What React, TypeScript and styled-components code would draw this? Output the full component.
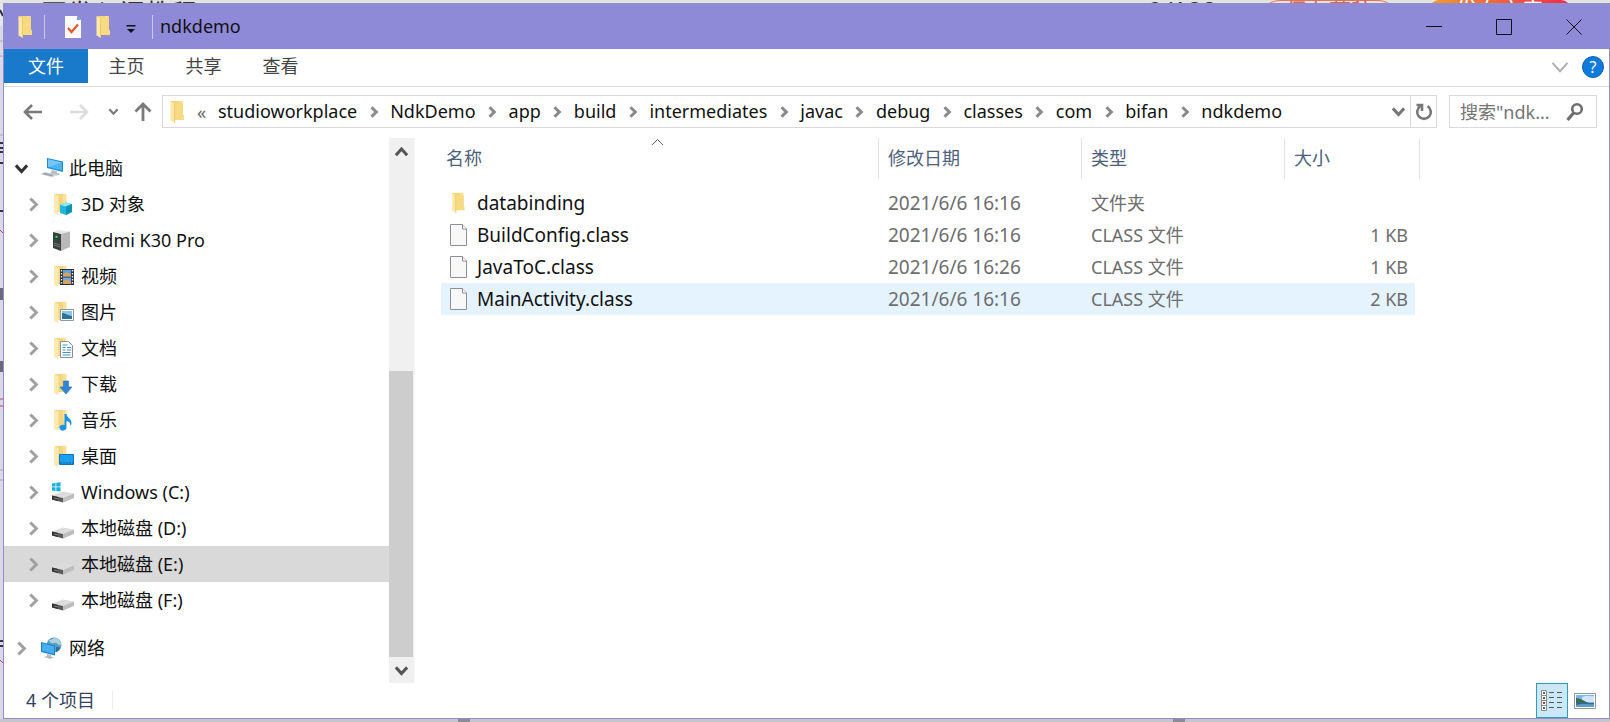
import React, { useState } from 'react';
import styled, { createGlobalStyle, css } from 'styled-components';

const Global = createGlobalStyle`
  * { box-sizing: border-box; }
  body { margin: 0; font: 18px/24px "Noto Sans", "Noto Sans CJK SC", sans-serif; color: #111; }
  button, input { font: inherit; color: inherit; }
  button { border: 0; padding: 0; background: none; }
  svg { display: block; flex: none; }
`;

/* ---------- desktop behind the window ---------- */

const Desktop = styled.div`
  position: relative;
  display: flex;
  min-height: 100vh;
  padding: 3px 0 3px 3px;
  background: #dad8e6;
`;

const BackPage = styled.div`
  position: absolute;
  inset: 0;
  overflow: hidden;
`;

const BackHeader = styled.div`
  position: absolute;
  inset: 0 0 auto;
  height: 4px;
  padding: 0 39px 0 41px;
  overflow: hidden;
  display: flex;
  align-items: flex-start;
  background: #e3e3e1;
  font-size: 26px;
  line-height: 26px;
  color: #333;
`;

const BackTitle = styled.span`
  flex: 1;
`;

const BackButton = styled.span<{ $solid?: boolean }>`
  width: 142px;
  height: 44px;
  margin-left: 29px;
  border: 1px solid #e8715a;
  border-radius: 22px;
  text-align: center;
  font-size: 22px;
  line-height: 18px;
  color: #d9644c;
  ${p => p.$solid && css`
    border: 0;
    border-radius: 10px;
    background: linear-gradient(90deg, #f59a2c, #ee2a4a);
    color: #fff;
  `}
`;

const BackCounter = styled.span`
  margin-right: 12px;
  line-height: 20px;
`;

const BackFooter = styled.div`
  position: absolute;
  inset: auto 0 0;
  height: 3px;
  display: flex;
  justify-content: space-between;
  padding: 0 425px 0 458px;
  background: #c6c5cc;
`;

const BackGrip = styled.i`
  width: 12px;
  height: 3px;
  background: #8d8b96;
`;

/* ---------- window frame ---------- */

const Window = styled.main`
  position: relative;
  flex: 1;
  min-width: 0;
  display: flex;
  flex-direction: column;
  border: 1px solid #918dc6;
  background: #fff;
`;

const TitleBar = styled.header`
  display: flex;
  align-items: center;
  height: 45px;
  padding-left: 13px;
  background: #8f8ad7;
`;

const TitleRule = styled.i`
  width: 1px;
  height: 24px;
  background: #c9c6ee;
`;

const QuickTools = styled.div`
  display: flex;
  align-items: center;
  padding: 0 8px 0 13px;
`;

const QuickButton = styled.button<{ $slim?: boolean }>`
  display: grid;
  place-items: center;
  width: ${p => (p.$slim ? 26 : 30)}px;
  height: 30px;
`;

const AppIcon = styled.span`
  margin-right: 11px;
`;

const Title = styled.h1`
  flex: 1;
  margin: 0 0 0 7px;
  padding-bottom: 2px;
  font-size: 18px;
  font-weight: 400;
`;

const WindowButton = styled.button`
  display: grid;
  place-items: center;
  width: 70px;
  height: 45px;
`;

/* ---------- ribbon ---------- */

const Ribbon = styled.div`
  display: flex;
  align-items: flex-start;
  height: 38px;
  padding-right: 5px;
  border-bottom: 1px solid #d9dadb;
`;

const Tab = styled.button<{ $primary?: boolean }>`
  width: ${p => (p.$primary ? 84 : 77)}px;
  height: 34px;
  color: ${p => (p.$primary ? '#fff' : '#444')};
  background: ${p => (p.$primary ? '#1979ca' : 'none')};
`;

const RibbonEnd = styled.div`
  display: flex;
  align-items: center;
  gap: 12px;
  height: 36px;
  margin-left: auto;
`;

const HelpButton = styled.button`
  width: 22px;
  height: 22px;
  border-radius: 50%;
  border: 1px solid #0a62b4;
  background: #0f7bdc;
  color: #fff;
  font-size: 16px;
  line-height: 20px;
`;

/* ---------- navigation row ---------- */

const NavRow = styled.div`
  display: flex;
  align-items: center;
  height: 51px;
  padding: 0 12px 2px 6px;
`;

const NavButton = styled.button<{ $w: number }>`
  display: grid;
  place-items: center;
  width: ${p => p.$w}px;
  height: 32px;
`;

const AddressBar = styled.div`
  flex: 1;
  min-width: 0;
  display: flex;
  align-items: center;
  height: 33px;
  padding-left: 6px;
  border: 1px solid #d9d9d9;
`;

const Crumbs = styled.nav`
  flex: 1;
  min-width: 0;
  display: flex;
  align-items: center;
  overflow: hidden;
`;

const Overflow = styled.button`
  width: 33px;
  height: 28px;
  color: #666;
`;

const Crumb = styled.a`
  padding-bottom: 2px;
  color: #111;
  text-decoration: none;
`;

const CrumbGap = styled.span`
  display: grid;
  place-items: center;
  width: 33px;
`;

const RefreshButton = styled.button`
  display: grid;
  place-items: center;
  width: 26px;
  height: 31px;
  border-left: 1px solid #d9d9d9;
`;

const SearchBox = styled.label`
  display: flex;
  align-items: center;
  width: 148px;
  height: 33px;
  margin-left: 12px;
  padding: 0 12px 0 10px;
  border: 1px solid #d9d9d9;
`;

const SearchInput = styled.input`
  flex: 1;
  min-width: 0;
  padding: 0;
  border: 0;
  outline: 0;
  background: none;
  &::placeholder { color: #757575; opacity: 1; }
`;

/* ---------- folder tree ---------- */

const Body = styled.div`
  flex: 1;
  display: flex;
  min-height: 0;
`;

const Sidebar = styled.aside`
  display: flex;
  width: 411px;
  border-right: 1px solid #f6f6f6;
`;

const Tree = styled.ul`
  flex: 1;
  margin: 0;
  padding: 12px 0 0;
  list-style: none;
`;

const TreeRow = styled.li<{ $child?: boolean; $selected?: boolean; $apart?: boolean }>`
  display: flex;
  align-items: center;
  height: 36px;
  margin-top: ${p => (p.$apart ? 12 : 0)}px;
  padding-left: ${p => (p.$child ? 17 : 5)}px;
  background: ${p => (p.$selected ? '#d9d9d9' : 'none')};
`;

const Expander = styled.button`
  display: grid;
  place-items: center;
  width: 24px;
  height: 24px;
  margin-right: 7px;
`;

const TreeLink = styled.a`
  display: flex;
  align-items: center;
  gap: 5px;
  color: #111;
  text-decoration: none;
`;

const Scrollbar = styled.div`
  display: flex;
  flex-direction: column;
  width: 25px;
  background: #f0f0f0;
`;

const ScrollButton = styled.button`
  display: grid;
  place-items: center;
  height: 26px;
`;

const Track = styled.div`
  flex: 1;
  display: flex;
  align-items: flex-end;
`;

const Thumb = styled.div`
  width: 24px;
  height: 58%;
  background: #cdcdcd;
`;

/* ---------- file list ---------- */

const Files = styled.section`
  flex: 1;
  min-width: 0;
  padding-left: 26px;
`;

const Table = styled.table`
  table-layout: fixed;
  width: 979px;
  border-collapse: separate;
  border-spacing: 0;
`;

const Col = styled.col<{ $w: number }>`
  width: ${p => p.$w}px;
`;

const Th = styled.th`
  position: relative;
  height: 49px;
  padding: 0 0 8px;
  text-align: left;
  font-weight: 400;
  color: #4c607a;
`;

const ThLabel = styled.div<{ $first?: boolean }>`
  height: 41px;
  padding-left: ${p => (p.$first ? 5 : 9)}px;
  line-height: 41px;
  border-right: 1px solid #e3e3e3;
`;

const SortMark = styled.span`
  position: absolute;
  top: 0;
  left: 50%;
  margin-left: -9px;
`;

const Td = styled.td<{ $size?: boolean }>`
  height: 32px;
  padding: 0 0 0 9px;
  color: #6d6d6d;
  white-space: nowrap;
  ${p => p.$size && css`
    padding-right: 7px;
    border-right: 5px solid transparent;
    background-clip: padding-box;
    text-align: right;
  `}
`;

const Tr = styled.tr<{ $hot?: boolean }>`
  ${p => p.$hot && css`
    ${Td} { background-color: #e5f3ff; }
  `}
`;

const FileLink = styled.a`
  display: flex;
  align-items: center;
  gap: 9px;
  font-size: 19px;
  color: #111;
  text-decoration: none;
`;

const Stamp = styled.time`
  font-size: 19px;
`;

/* ---------- status bar ---------- */

const StatusBar = styled.footer`
  display: flex;
  align-items: center;
  height: 35px;
  padding: 0 7px 0 22px;
  color: #33415c;
`;

const Count = styled.span`
  margin-bottom: 2px;
  padding-right: 17px;
  border-right: 1px solid #eee;
  line-height: 20px;
`;

const Views = styled.div`
  display: flex;
  margin-left: auto;
`;

const ViewButton = styled.button<{ $on?: boolean }>`
  display: grid;
  place-items: center;
  width: ${p => (p.$on ? 32 : 34)}px;
  height: 35px;
  ${p => p.$on && css`
    border: 1px solid #2f9cc4;
    background: #cce8f6;
  `}
`;

/* ---------- drawings ---------- */

const FolderShape = () => (
  <>
    <path d="M2 1h7l5 3v15H4z" fill="#f0cb62" />
    <path d="M4 1h9.500v18H4z" fill="#f5d57a" />
    <path d="M10 1h3.500v14H10z" fill="#f9df8f" />
    <path d="M1.500 1L6 3.500V23L1.500 20.500z" fill="#fde9a6" />
    <path d="M6 3.500L13.500 2v12l1.500 1.500V20L6 20z" fill="#f8da82" />
    <path d="M6 3.500V23l-1-.5V3z" fill="#eec968" />
  </>
);

const Folder = () => (
  <svg width="16" height="24" viewBox="0 0 16 24"><FolderShape /></svg>
);

const FolderWith = ({ children }: { children: React.ReactNode }) => (
  <svg width="24" height="24" viewBox="0 0 24 24">
    <path d="M2 2h8l4 1v17H3z" fill="#f3d583" />
    <path d="M2 2l4.500 2v19L2 21z" fill="#fdeab0" />
    <path d="M11 2h3.500v10H11z" fill="#f9e19a" />
    {children}
  </svg>
);

const Chevron = ({ dir, size = 12, w = 3, color = '#8a8a8a' }:
  { dir: 'up' | 'down' | 'right'; size?: number; w?: number; color?: string }) => {
  const d = { up: 'M1.500 9L6 4l4.500 5', down: 'M1.500 3.500L6 8.500l4.500-5', right: 'M3.500 1.200L8.300 6 3.500 10.800' }[dir];
  return (
    <svg width={size} height={size} viewBox="0 0 12 12" fill="none" stroke={color} strokeWidth={(w * 12) / size}>
      <path d={d} />
    </svg>
  );
};

const Page = () => (
  <svg width="18" height="24" viewBox="0 0 18 24">
    <path d="M.5 1.500h12l4 4.500v16.500H.5z" fill="#f8f8f8" stroke="#8b8f94" />
    <path d="M12.500 1.500V6h4" fill="#fff" stroke="#8b8f94" />
  </svg>
);

const Drive = ({ windows }: { windows?: boolean }) => (
  <svg width="24" height="24" viewBox="0 0 24 24">
    <path d="M0 15.500l11-4 11 2L11 18z" fill="#dcdcdc" />
    <path d="M0 15.500l11 2.500v4.500L0 19.500z" fill="#5a5a5a" />
    <path d="M0 15.500l6 1.400V21l-6-1.500z" fill="#333" />
    <path d="M11 18l11-4.500V18l-11 4.500z" fill="#bdbdbd" />
    <path d="M2 17.400l4 1v1.200l-4-1z" fill="#888" />
    {windows && (
      <path d="M0 3.500l3.500-.5v3.500H0zM4.300 2.800l4.200-.6v4.300H4.300zM0 7.300h3.500v3.600L0 10.400zM4.300 7.300h4.200v4.300l-4.200-.6z" fill="#12b0dc" />
    )}
  </svg>
);

const Computer = () => (
  <svg width="24" height="24" viewBox="0 0 24 24">
    <path d="M7 2l16 3.500V16L7 12z" fill="#2287d0" />
    <path d="M8 3.300l14 3.100v8.200L8 11z" fill="#4fb4f5" />
    <path d="M8 3.300l14 3.100-14 4.600z" fill="#74c8fa" />
    <path d="M12 14l5 1.300v1.700l4 1-4 1.500-7-2z" fill="#b9bfc6" />
    <path d="M0 18l5-2 12 3-5 2.500z" fill="#d3d8dd" />
    <path d="M2 18l3-1.200 9 2.300-2.500 1.200z" fill="#9aa3ab" />
  </svg>
);

const Phone = () => (
  <svg width="24" height="24" viewBox="0 0 24 24">
    <path d="M1 4l5-2 12 1.500-7 2.500z" fill="#e6e6e6" />
    <path d="M1 4l8 2v17l-8-3z" fill="#3b3f3d" />
    <path d="M9 6l9-2.500V19l-9 4z" fill="#b9b9b9" />
    <path d="M2.500 6.500l4 1v4l-4-1z" fill="#174d2b" />
    <path d="M3.500 7.800h2v2h-2z" fill="#48e07c" />
    <path d="M2 15l6 2M2 17l6 2" stroke="#777" fill="none" />
  </svg>
);

const Network = () => (
  <svg width="24" height="24" viewBox="0 0 24 24">
    <circle cx="14" cy="9" r="7.500" fill="#5b9fbe" />
    <path d="M9 4c3 0 4-2 7-2 3 1 5 4 5 7-3 1-4-3-7-2s-4-1-5-3z" fill="#a8d3e0" />
    <path d="M16 11c2 0 4 0 4 1-1 2-2 3-4 4z" fill="#2d6f92" />
    <path d="M1 6l14 3.500v10L1 16z" fill="#1b7fcb" />
    <path d="M2 7.300l12 3v7.800L2 15z" fill="#45aef5" />
    <path d="M7 18l4 1v1.500l3 1-4 1.500-6-2 3-1z" fill="#b6bdc4" />
  </svg>
);

const Landscape = () => (
  <svg width="22" height="16" viewBox="0 0 22 16">
    <path d="M.5 .5h21v15H.5z" fill="#fff" stroke="#8f979e" />
    <path d="M2 2h18v6H2z" fill="#79b4f0" />
    <path d="M8 4c4-2 8 0 12-1v6H8z" fill="#cfe5fa" />
    <path d="M2 5c4 0 8 3 13 5H2z" fill="#3c6b4c" />
    <path d="M2 9.500h18V14H2z" fill="#2c6c9c" />
    <path d="M2 12c6-2 12 0 18-1v3H2z" fill="#5d9fc4" />
  </svg>
);

const icons: Record<string, React.ReactNode> = {
  pc: <Computer />,
  phone: <Phone />,
  net: <Network />,
  drive: <Drive />,
  windows: <Drive windows />,
  cube: (
    <FolderWith>
      <path d="M8 13l6-2.500L20 12v8l-6 3-6-2z" fill="#22b8d6" />
      <path d="M8 13l6-2.500L20 12l-6 2.500z" fill="#8fe9f5" />
      <path d="M14 14.500L20 12v8l-6 3z" fill="#0d93b5" />
    </FolderWith>
  ),
  video: (
    <FolderWith>
      <path d="M8 5h14v16H8z" fill="#2b2f3a" />
      <path d="M11 6h8v6.500h-8z" fill="#5aa0e6" />
      <path d="M11 13.500h8V20h-8z" fill="#6aa7e8" />
      <path d="M11 10l4-2 4 3v1.500h-8zM11 17l4-1.500 4 2.500v2h-8z" fill="#d9a35c" />
      <path d="M9.500 6v15M20.500 6v15" stroke="#eee" strokeWidth="1.400" strokeDasharray="1.500 1.500" />
    </FolderWith>
  ),
  picture: (
    <FolderWith>
      <path d="M8.500 9.500h13v11h-13z" fill="#fff" stroke="#8f979e" />
      <path d="M10 11h10v4H10z" fill="#8cc3f3" />
      <path d="M10 13c3 0 5 2 9 3h-9z" fill="#3c7a5c" />
      <path d="M10 15.500h10V19H10z" fill="#2a73a8" />
    </FolderWith>
  ),
  doc: (
    <FolderWith>
      <path d="M8.500 5.500h8l4 4v12h-12z" fill="#fff" stroke="#8b8f94" />
      <path d="M10.500 9h5M10.500 11.500h3M15 11.500h4M10.500 14h3M15 14h4M10.500 16.500h8M10.500 19h8" stroke="#3d8fc9" fill="none" />
    </FolderWith>
  ),
  down: (
    <FolderWith>
      <path d="M11.500 9h5v6h3.500l-6 7-6-7h3.500z" fill="#2f86d6" stroke="#1f6bb5" strokeWidth=".6" />
    </FolderWith>
  ),
  music: (
    <FolderWith>
      <path d="M12.500 6h2c.5 4 5 4.500 5 9 0 1.500-.5 2.500-1 3 0-3-1.500-4.500-4-5v6.500a3.600 3 0 1 1-2-2.500z" fill="#1c94ea" />
    </FolderWith>
  ),
  desktop: (
    <FolderWith>
      <path d="M7.500 10.500h14v10h-14z" fill="#1a9ff1" stroke="#1672b4" />
      <path d="M8 19h13" stroke="#0f5f9c" strokeDasharray="2 1" />
    </FolderWith>
  ),
};

/* ---------- data ---------- */

const crumbs = ['studioworkplace', 'NdkDemo', 'app', 'build', 'intermediates', 'javac', 'debug', 'classes', 'com', 'bifan', 'ndkdemo'];

const tree = [
  { name: '此电脑', icon: 'pc', root: true, open: true },
  { name: '3D 对象', icon: 'cube' },
  { name: 'Redmi K30 Pro', icon: 'phone' },
  { name: '视频', icon: 'video' },
  { name: '图片', icon: 'picture' },
  { name: '文档', icon: 'doc' },
  { name: '下载', icon: 'down' },
  { name: '音乐', icon: 'music' },
  { name: '桌面', icon: 'desktop' },
  { name: 'Windows (C:)', icon: 'windows' },
  { name: '本地磁盘 (D:)', icon: 'drive' },
  { name: '本地磁盘 (E:)', icon: 'drive', selected: true },
  { name: '本地磁盘 (F:)', icon: 'drive' },
  { name: '网络', icon: 'net', root: true, apart: true },
];

const files = [
  { name: 'databinding', date: '2021/6/6 16:16', type: '文件夹', size: '', folder: true },
  { name: 'BuildConfig.class', date: '2021/6/6 16:16', type: 'CLASS 文件', size: '1 KB' },
  { name: 'JavaToC.class', date: '2021/6/6 16:26', type: 'CLASS 文件', size: '1 KB' },
  { name: 'MainActivity.class', date: '2021/6/6 16:16', type: 'CLASS 文件', size: '2 KB', hot: true },
];

export default function App() {
  const [query, setQuery] = useState('');
  return (
    <Desktop>
      <Global />
      <BackPage aria-hidden="true">
        <svg width="4" height="722" viewBox="0 0 4 722">
          <path d="M0 0h4v26H0z" fill="#e6e5ea" />
          <path d="M0 10l3 6M0 143h4M0 148h3M0 152h4M0 163h3M0 211h4M0 641h3M0 646h4" stroke="#33324a" strokeWidth="2" />
          <path d="M0 41h4M0 56h4M0 135h4M0 470h4M0 480h4" stroke="#a9a7ba" />
          <path d="M0 230l4 4M0 399h4M0 406h4M0 660l4 4" stroke="#c2405c" />
          <path d="M0 288h3v12H0zM0 361h3v11H0z" fill="#6a687c" />
        </svg>
        <BackHeader>
          <BackTitle>开发入门教程</BackTitle>
          <BackCounter>9/100</BackCounter>
          <BackButton>保存草稿</BackButton>
          <BackButton $solid>发布文章</BackButton>
        </BackHeader>
        <BackFooter><BackGrip /><BackGrip /></BackFooter>
      </BackPage>

      <Window>
        <TitleBar>
          <AppIcon><Folder /></AppIcon>
          <TitleRule />
          <QuickTools>
            <QuickButton aria-label="属性">
              <svg width="16" height="24" viewBox="0 0 16 24">
                <path d="M0 1h12l4 4v18H0z" fill="#fbfbfd" />
                <path d="M12 1v4h4z" fill="#6f9bd0" />
                <path d="M3 13l3.500 4L13 9.500" fill="none" stroke="#e2562b" strokeWidth="2.200" />
              </svg>
            </QuickButton>
            <QuickButton aria-label="新建文件夹"><Folder /></QuickButton>
            <QuickButton $slim aria-label="自定义快速访问工具栏">
              <svg width="10" height="16" viewBox="0 0 10 16">
                <path d="M.5 6h9v1.500h-9zM1 10h8l-4 4z" fill="#111" />
              </svg>
            </QuickButton>
          </QuickTools>
          <TitleRule />
          <Title>ndkdemo</Title>
          <WindowButton aria-label="最小化">
            <svg width="16" height="16" viewBox="0 0 16 16"><path d="M0 7.500h16" stroke="#111" /></svg>
          </WindowButton>
          <WindowButton aria-label="最大化">
            <svg width="16" height="16" viewBox="0 0 16 16"><path d="M.5 .5h15v15H.5z" fill="none" stroke="#111" /></svg>
          </WindowButton>
          <WindowButton aria-label="关闭">
            <svg width="16" height="16" viewBox="0 0 16 16"><path d="M.5 .5l15 15M15.500 .5l-15 15" stroke="#111" /></svg>
          </WindowButton>
        </TitleBar>

        <Ribbon>
          <Tab $primary>文件</Tab>
          <Tab>主页</Tab>
          <Tab>共享</Tab>
          <Tab>查看</Tab>
          <RibbonEnd>
            <button aria-label="展开功能区"><Chevron dir="down" size={20} w={2} color="#b0b0b0" /></button>
            <HelpButton aria-label="帮助">?</HelpButton>
          </RibbonEnd>
        </Ribbon>

        <NavRow>
          <NavButton $w={46} aria-label="后退">
            <svg width="20" height="18" viewBox="0 0 20 18" fill="none" stroke="#7a7a7a" strokeWidth="2.600"><path d="M19 9H2M9 2L2 9l7 7" /></svg>
          </NavButton>
          <NavButton $w={46} aria-label="前进" disabled>
            <svg width="20" height="18" viewBox="0 0 20 18" fill="none" stroke="#dcdcdc" strokeWidth="2.600"><path d="M1 9h17M11 2l7 7-7 7" /></svg>
          </NavButton>
          <NavButton $w={22} aria-label="最近浏览的位置"><Chevron dir="down" size={11} w={2} color="#777" /></NavButton>
          <NavButton $w={38} aria-label="上移">
            <svg width="18" height="20" viewBox="0 0 18 20" fill="none" stroke="#7a7a7a" strokeWidth="2.800"><path d="M9 19V2M1.500 9.500L9 2l7.500 7.500" /></svg>
          </NavButton>
          <AddressBar>
            <Folder />
            <Crumbs aria-label="地址">
              <Overflow aria-label="更多">«</Overflow>
              {crumbs.map((c, i) => (
                <React.Fragment key={c}>
                  {i > 0 && <CrumbGap><Chevron dir="right" /></CrumbGap>}
                  <Crumb href="#">{c}</Crumb>
                </React.Fragment>
              ))}
            </Crumbs>
            <NavButton $w={24} aria-label="以前的位置"><Chevron dir="down" size={15} w={3} color="#777" /></NavButton>
            <RefreshButton aria-label="刷新">
              <svg width="18" height="20" viewBox="0 0 18 20" fill="none" stroke="#777" strokeWidth="2.600">
                <path d="M12.500 4.200a6.800 6.800 0 1 1-7 0" />
                <path d="M1.500 3H7v6" />
              </svg>
            </RefreshButton>
          </AddressBar>
          <SearchBox>
            <SearchInput aria-label="搜索" placeholder={'搜索"ndk...'} value={query} onChange={e => setQuery(e.target.value)} />
            <svg width="18" height="20" viewBox="0 0 18 20" fill="none" stroke="#6f6f6f">
              <circle cx="11" cy="7" r="4.800" strokeWidth="2.600" />
              <path d="M7.500 11L1.500 18" strokeWidth="3.200" />
            </svg>
          </SearchBox>
        </NavRow>

        <Body>
          <Sidebar>
            <Tree>
              {tree.map(t => (
                <TreeRow key={t.name} $child={!t.root} $selected={t.selected} $apart={t.apart}>
                  <Expander aria-label={t.open ? '折叠' : '展开'}>
                    <Chevron dir={t.open ? 'down' : 'right'} size={15} color={t.open ? '#333' : '#a0a0a0'} />
                  </Expander>
                  <TreeLink href="#">{icons[t.icon]}{t.name}</TreeLink>
                </TreeRow>
              ))}
            </Tree>
            <Scrollbar>
              <ScrollButton aria-label="向上滚动"><Chevron dir="up" size={15} color="#555" /></ScrollButton>
              <Track><Thumb /></Track>
              <ScrollButton aria-label="向下滚动"><Chevron dir="down" size={15} color="#555" /></ScrollButton>
            </Scrollbar>
          </Sidebar>

          <Files>
            <Table>
              <colgroup><Col $w={438} /><Col $w={203} /><Col $w={203} /><Col $w={135} /></colgroup>
              <thead>
                <tr>
                  <Th>
                    <ThLabel $first>名称</ThLabel>
                    <SortMark>
                      <svg width="13" height="8" viewBox="0 0 13 8"><path d="M1 7l5.500-5.500L12 7" fill="none" stroke="#666" /></svg>
                    </SortMark>
                  </Th>
                  <Th><ThLabel>修改日期</ThLabel></Th>
                  <Th><ThLabel>类型</ThLabel></Th>
                  <Th><ThLabel>大小</ThLabel></Th>
                </tr>
              </thead>
              <tbody>
                {files.map(f => (
                  <Tr key={f.name} $hot={f.hot}>
                    <Td>
                      <FileLink href="#">
                        {f.folder ? <svg width="18" height="22" viewBox="0 0 18 24"><FolderShape /></svg> : <Page />}
                        {f.name}
                      </FileLink>
                    </Td>
                    <Td><Stamp>{f.date}</Stamp></Td>
                    <Td>{f.type}</Td>
                    <Td $size>{f.size}</Td>
                  </Tr>
                ))}
              </tbody>
            </Table>
          </Files>
        </Body>

        <StatusBar>
          <Count>4 个项目</Count>
          <Views>
            <ViewButton $on aria-label="详细信息">
              <svg width="22" height="22" viewBox="0 0 22 22" fill="none">
                <path d="M.5 .5h5v20h-5zM.5 5.500h5M.5 10.500h5M.5 15.500h5" fill="#fff" stroke="#8b8b8b" />
                <path d="M2 2h2v2H2zM2 17h2v2H2z" fill="#666" />
                <path d="M2 7h2v2H2zM2 12h2v2H2z" fill="#a83a3a" />
                <path d="M8 2.500h5M16 2.500h5M8 7.500h5M16 7.500h5M8 12.500h5M16 12.500h5M8 17.500h5M16 17.500h5" stroke="#4d5a5e" />
              </svg>
            </ViewButton>
            <ViewButton aria-label="大缩略图"><Landscape /></ViewButton>
          </Views>
        </StatusBar>
      </Window>
    </Desktop>
  );
}
